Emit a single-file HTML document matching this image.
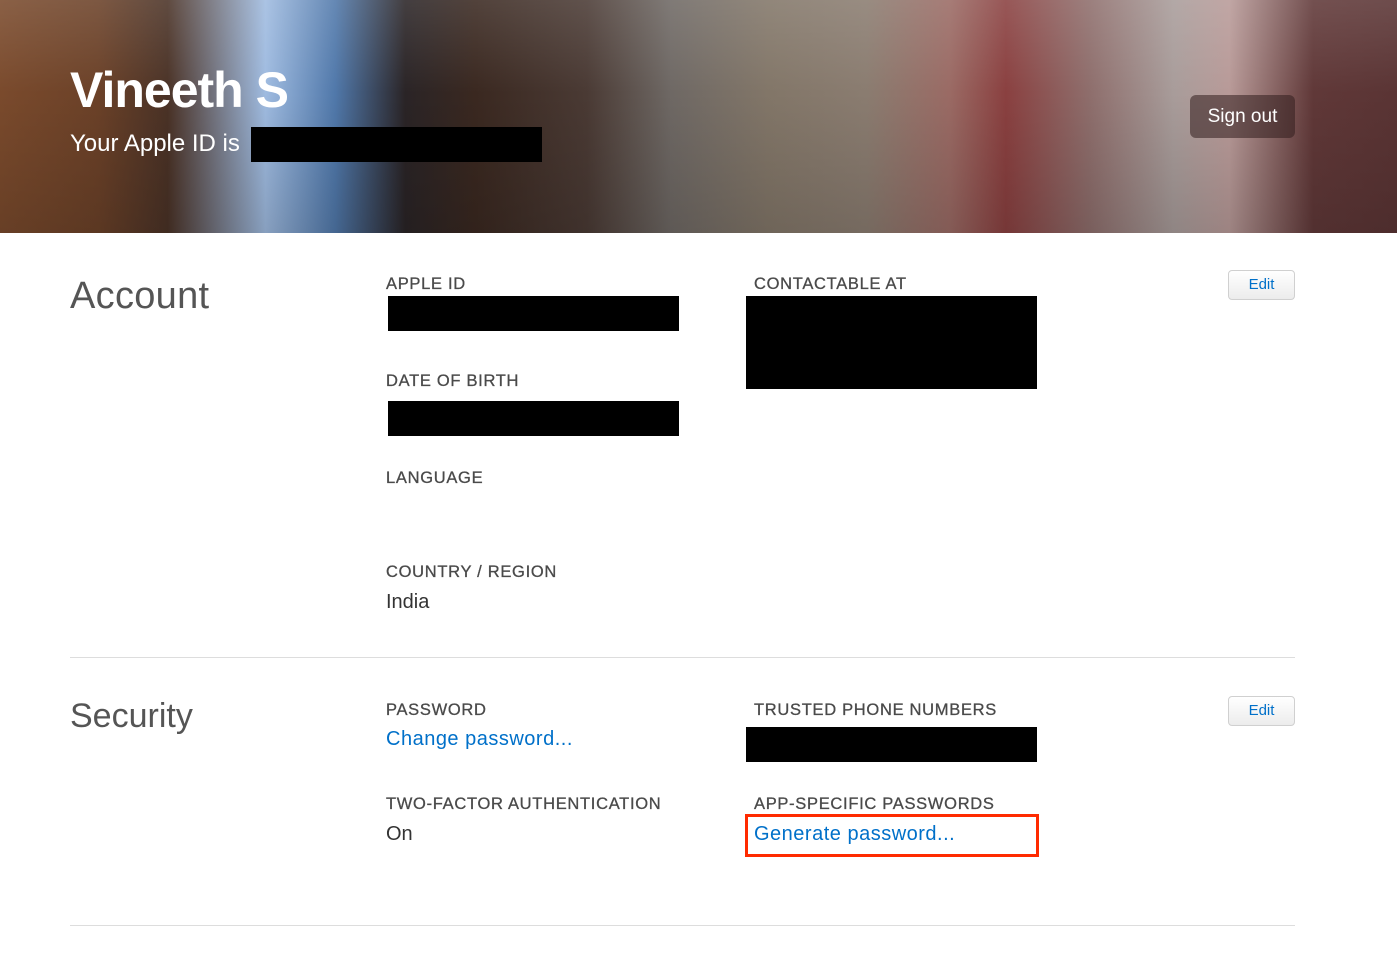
<!DOCTYPE html>
<html><head><style>
body{margin:0;width:1397px;height:953px;background:#fff;font-family:"Liberation Sans",Helvetica,sans-serif;position:relative;overflow:hidden}
.hdr{position:absolute;left:0;top:0;width:1397px;height:233px;background:linear-gradient(90deg,#7a4a2c 0%,#6b4128 7%,#4a3226 12%,#9fbbe0 19%,#5078aa 24%,#2a2426 29%,#3a2820 34%,#4a3a34 42%,#6e6864 48%,#827668 55%,#8a7c70 62%,#9a6a64 68%,#8a4040 72%,#8e6e6c 78%,#a89c9a 84%,#b89a98 88%,#603838 94%,#5a3434 100%)}
.hdr:before{content:"";position:absolute;inset:0;background:linear-gradient(180deg,rgba(255,255,255,.12) 0%,rgba(0,0,0,0) 40%,rgba(0,0,0,.15) 100%)}
.t{position:absolute;white-space:nowrap}
.lbl{font-size:16.5px;color:#4a4a4a;letter-spacing:.7px;-webkit-text-stroke:.3px #4a4a4a}
.val{font-size:20px;color:#333}
.lnk{font-size:20px;color:#0070c9;letter-spacing:.5px}
.blk{position:absolute;background:#000}
.edit{position:absolute;width:65px;height:28px;border:1px solid #d0d0d0;border-radius:4px;background:linear-gradient(#fff,#ececec);color:#0070c9;font-size:15px;text-align:center;line-height:28px}
.hr{position:absolute;left:70px;width:1225px;height:1px;background:#ddd}
</style></head><body>
<div class="hdr"></div>
<div class="t" style="left:70px;top:61px;font-size:50px;color:#fff;font-weight:bold;letter-spacing:-1px">Vineeth S</div>
<div class="t" style="left:70px;top:130px;font-size:24px;color:#fff">Your Apple ID is</div>
<div class="blk" style="left:251px;top:127px;width:291px;height:35px"></div>
<div class="t" style="left:1190px;top:95px;width:105px;height:43px;background:rgba(50,30,30,.55);border-radius:6px;color:#fff;font-size:19px;text-align:center;line-height:43px">Sign out</div>

<div class="t" style="left:70px;top:275px;font-size:38px;color:#555;letter-spacing:.3px">Account</div>
<div class="t lbl" style="left:386px;top:275px">APPLE ID</div>
<div class="blk" style="left:388px;top:296px;width:291px;height:35px"></div>
<div class="t lbl" style="left:386px;top:372px">DATE OF BIRTH</div>
<div class="blk" style="left:388px;top:401px;width:291px;height:35px"></div>
<div class="t lbl" style="left:386px;top:469px">LANGUAGE</div>
<div class="t lbl" style="left:386px;top:563px">COUNTRY / REGION</div>
<div class="t val" style="left:386px;top:591px">India</div>
<div class="t lbl" style="left:754px;top:275px">CONTACTABLE AT</div>
<div class="blk" style="left:746px;top:296px;width:291px;height:93px"></div>
<div class="edit" style="left:1228px;top:270px">Edit</div>
<div class="hr" style="top:657px"></div>

<div class="t" style="left:70px;top:697px;font-size:34px;color:#555">Security</div>
<div class="t lbl" style="left:386px;top:701px">PASSWORD</div>
<div class="t lnk" style="left:386px;top:728px">Change password...</div>
<div class="t lbl" style="left:386px;top:795px">TWO-FACTOR AUTHENTICATION</div>
<div class="t val" style="left:386px;top:823px">On</div>
<div class="t lbl" style="left:754px;top:701px">TRUSTED PHONE NUMBERS</div>
<div class="blk" style="left:746px;top:727px;width:291px;height:35px"></div>
<div class="t lbl" style="left:754px;top:795px">APP-SPECIFIC PASSWORDS</div>
<div class="t" style="left:745px;top:814px;width:288px;height:37px;border:3px solid #ff2a00"></div>
<div class="t lnk" style="left:754px;top:823px">Generate password...</div>
<div class="edit" style="left:1228px;top:696px">Edit</div>
<div class="hr" style="top:925px"></div>
</body></html>
